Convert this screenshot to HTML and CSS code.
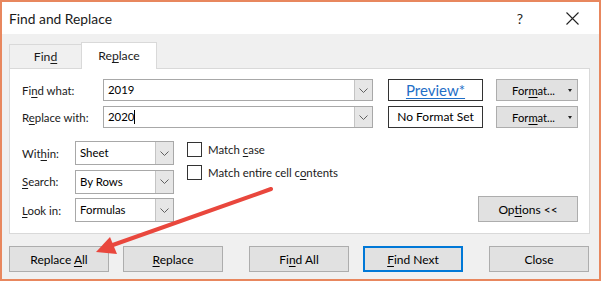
FILE: index.html
```html
<!DOCTYPE html>
<html lang="en">
<head>
  <meta charset="UTF-8" />
  <title>Find and Replace</title>
  <link rel="stylesheet" href="styles.css">
</head>
<body>
  <div class="window">
    <div class="titlebar">
      <span class="title">Find and Replace</span>
      <span class="help">?</span>
      <svg class="close-x" width="13" height="13" viewBox="0 0 13 13">
        <path d="M0.5 0.5 L12.5 12.5 M12.5 0.5 L0.5 12.5" stroke="#222" stroke-width="1.1" fill="none"/>
      </svg>
    </div>

    <div class="content">
      <!-- tabs -->
      <div class="tabs">
        <div class="tab">Fin<u>d</u></div>
        <div class="tab active">Re<u>p</u>lace</div>
      </div>

      <div class="panel">
        <div class="field-row">
          <label class="field-label">Fi<u>n</u>d what:</label>
          <div class="combo">
            <span class="combo-text">2019</span>
            <span class="combo-btn"><svg width="9" height="5" viewBox="0 0 9 5"><polyline points="0.5,0.5 4.5,4.5 8.5,0.5" fill="none" stroke="#606060" stroke-width="1"/></svg></span>
          </div>
          <div class="format-box preview">Preview*</div>
          <button class="btn format-btn"><span>For<u>m</u>at...</span><span class="caret"></span></button>
        </div>
        <div class="field-row">
          <label class="field-label">R<u>e</u>place with:</label>
          <div class="combo">
            <span class="combo-text">2020<span class="cursor"></span></span>
            <span class="combo-btn"><svg width="9" height="5" viewBox="0 0 9 5"><polyline points="0.5,0.5 4.5,4.5 8.5,0.5" fill="none" stroke="#606060" stroke-width="1"/></svg></span>
          </div>
          <div class="format-box">No Format Set</div>
          <button class="btn format-btn"><span>For<u>m</u>at...</span><span class="caret"></span></button>
        </div>

        <div class="options-area">
          <div class="selects">
            <label class="sel-label">Wit<u>h</u>in:</label>
            <div class="select">
              <span class="select-text">Sheet</span>
              <span class="select-btn"><svg width="9" height="5" viewBox="0 0 9 5"><polyline points="0.5,0.5 4.5,4.5 8.5,0.5" fill="none" stroke="#606060" stroke-width="1"/></svg></span>
            </div>
            <label class="sel-label"><u>S</u>earch:</label>
            <div class="select">
              <span class="select-text">By Rows</span>
              <span class="select-btn"><svg width="9" height="5" viewBox="0 0 9 5"><polyline points="0.5,0.5 4.5,4.5 8.5,0.5" fill="none" stroke="#606060" stroke-width="1"/></svg></span>
            </div>
            <label class="sel-label"><u>L</u>ook in:</label>
            <div class="select">
              <span class="select-text">Formulas</span>
              <span class="select-btn"><svg width="9" height="5" viewBox="0 0 9 5"><polyline points="0.5,0.5 4.5,4.5 8.5,0.5" fill="none" stroke="#606060" stroke-width="1"/></svg></span>
            </div>
          </div>

          <div class="checks">
            <div class="check"><span class="box"></span><span>Match <u>c</u>ase</span></div>
            <div class="check"><span class="box"></span><span>Match entire cell c<u>o</u>ntents</span></div>
          </div>

          <button class="btn options-btn">Op<u>t</u>ions &lt;&lt;</button>
        </div>
      </div>

      <div class="actions">
        <button class="btn action">Replace <u>A</u>ll</button>
        <button class="btn action"><u>R</u>eplace</button>
        <button class="btn action wide-gap">Fi<u>n</u>d All</button>
        <button class="btn action default"><u>F</u>ind Next</button>
        <button class="btn action wide-gap">Close</button>
      </div>
    </div>

    <!-- annotation arrow -->
    <svg class="arrow" width="601" height="281" viewBox="0 0 601 281">
      <line x1="271" y1="189" x2="110" y2="246" stroke="#e9473d" stroke-width="4" stroke-linecap="round"/>
      <polygon points="96,252 117,254 110,237" fill="#e9473d"/>
    </svg>
  </div>
</body>
</html>
```

FILE: styles.css
```css
* { box-sizing: border-box; }
body {
  margin: 0;
  font-family: Lato, "Noto Sans", sans-serif;
  font-size: 11.4px;
  color: #1a1a1a;
  background: #fff;
}
u { text-underline-offset: 2px; text-decoration-thickness: 1px; }

.window {
  position: relative;
  width: 601px;
  height: 281px;
  border: 2px solid #e8875e;
  background: #f0f0f0;
  overflow: hidden;
}
.titlebar {
  height: 32px;
  background: #fff;
  display: flex;
  align-items: center;
  padding-left: 7px;
}
.title {
  font-size: 13.8px;
  color: #1a1a1a;
  flex: 1;
}
.help {
  font-size: 14px;
  margin-right: 43px;
  color: #222;
}
.close-x { margin-right: 20px; }

.content { padding: 8px 7px 0; }

/* tabs */
.tabs {
  display: flex;
  align-items: flex-end;
  height: 26px;
}
.tab {
  height: 24px;
  padding-top: 4px;
  text-align: center;
  border: 1px solid #d9d9d9;
  border-bottom: none;
  background: #f0f0f0;
  font-size: 12.2px;
}
.tab:first-child { width: 72px; border-right: none; }
.tab.active {
  width: 76px;
  height: 27px;
  margin-bottom: -1px;
  background: #fff;
  position: relative;
  z-index: 1;
  padding-top: 5px;
}

.panel {
  width: 581px;
  height: 166px;
  background: #fff;
  border: 1px solid #d9d9d9;
  padding: 10px 11px 10px 12px;
}
.field-row {
  display: flex;
  align-items: center;
  height: 22px;
}
.field-row + .field-row { margin-top: 5px; }
.field-label { width: 81px; }
.combo {
  width: 270px;
  height: 22px;
  border: 1px solid #a8a8a8;
  display: flex;
}
.combo-text {
  flex: 1;
  padding-left: 4px;
  line-height: 20px;
  color: #000;
}
.cursor {
  display: inline-block;
  width: 1px;
  height: 14px;
  background: #000;
  vertical-align: -3px;
}
.combo-btn, .select-btn {
  width: 18px;
  background: #e6e6e6;
  border-left: 1px solid #c4c4c4;
  display: flex;
  align-items: center;
  justify-content: center;
}
.format-box {
  width: 95px;
  height: 22px;
  margin-left: 15px;
  border: 1px solid #333;
  text-align: center;
  line-height: 20px;
  color: #000;
  font-size: 12px;
}
.format-box.preview {
  color: #1f6fc7;
  text-decoration: underline;
  text-underline-offset: 2px;
  font-size: 15px;
}

.btn {
  font-family: inherit;
  font-size: 11.4px;
  color: #000;
  background: #e1e1e1;
  border: 1px solid #adadad;
  padding: 0;
}
.format-btn {
  width: 82px;
  height: 22px;
  margin-left: 13px;
  display: flex;
  align-items: center;
  justify-content: flex-end;
  padding-right: 5px;
  font-size: 11.2px;
}
.caret {
  display: inline-block;
  margin-left: 13px;
  border-left: 2.5px solid transparent;
  border-right: 2.5px solid transparent;
  border-top: 3px solid #222;
}

/* lower options */
.options-area {
  display: flex;
  margin-top: 13px;
}
.selects {
  display: grid;
  grid-template-columns: 53px 99px;
  grid-auto-rows: 24px;
  row-gap: 4.5px;
  align-items: center;
}
.select {
  height: 24px;
  border: 1px solid #a8a8a8;
  display: flex;
}
.select-text {
  flex: 1;
  padding-left: 4px;
  line-height: 22px;
  color: #000;
}
.checks {
  margin-left: 13px;
  padding-top: 1px;
  display: flex;
  flex-direction: column;
  gap: 9px;
}
.check {
  display: flex;
  align-items: center;
  height: 14px;
}
.box {
  width: 15px;
  height: 15px;
  border: 1px solid #333;
  background: #fff;
  margin-right: 6px;
}
.options-btn {
  width: 100px;
  height: 26px;
  margin-left: auto;
  align-self: flex-end;
  font-size: 12px;
}

/* bottom buttons */
.actions {
  display: flex;
  margin-top: 12px;
  gap: 14px;
}
.action { width: 100px; height: 26px; font-size: 12px; }
.action.wide-gap { margin-left: 12px; }
.action.default { border: 2px solid #0078d7; }

.arrow {
  position: absolute;
  left: -2px;
  top: -2px;
  pointer-events: none;
}
```
